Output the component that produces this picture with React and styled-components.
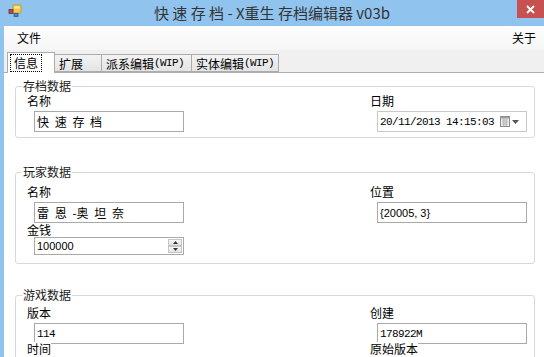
import React from "react";
import styled, { createGlobalStyle } from "styled-components";

const GlobalStyle = createGlobalStyle`
  html, body { margin: 0; padding: 0; background: #fff; }
  body { font-family: "Noto Sans CJK SC", sans-serif; font-size: 12px; color: #000; }
  * { box-sizing: border-box; }
`;

const Win = styled.div`
  width: 544px;
  height: 357px;
  overflow: hidden;
  display: flex;
  flex-direction: column;
  background: #fff;
`;

const TitleBar = styled.div`
  height: 26px;
  flex: none;
  background: #90c4ef;
  display: grid;
  grid-template-columns: 1fr auto 1fr;
  align-items: start;
`;

const AppIcon = styled.svg`
  justify-self: start;
  margin: 4px 0 0 8px;
  display: block;
`;

const Title = styled.div`
  font-family: "Noto Sans CJK SC", sans-serif;
  font-size: 15px;
  line-height: 26px;
  color: #333;
  white-space: nowrap;
`;

const CloseBtn = styled.div`
  justify-self: end;
  width: 27px;
  height: 18px;
  background: #c75050;
  display: flex;
  align-items: center;
  justify-content: center;
`;

const Body = styled.div`
  flex: 1;
  display: flex;
  min-height: 0;
`;

const SideBorder = styled.div`
  width: 4px;
  flex: none;
  background: #90c4ef;
`;

const Main = styled.div`
  flex: 1;
  min-width: 0;
  display: flex;
  flex-direction: column;
`;

const MenuBar = styled.div`
  height: 24px;
  flex: none;
  display: flex;
  justify-content: space-between;
  align-items: center;
  padding: 0 2px 0 7px;
  background: linear-gradient(#fdfdfd, #f6f6f6);
`;

const MenuItem = styled.span`
  padding: 0 6px;
  line-height: 20px;
  font-size: 12px;
`;

const TabStrip = styled.div`
  height: 23px;
  flex: none;
  display: flex;
  align-items: flex-end;
  padding-left: 3px;
  background: #f0f0f0;
  border-bottom: 1px solid #acacac;
`;

const Tab = styled.div`
  position: relative;
  z-index: ${(p) => (p.$active ? 1 : 0)};
  width: ${(p) => p.$w}px;
  height: ${(p) => (p.$active ? 21 : 18)}px;
  margin-bottom: ${(p) => (p.$active ? -1 : 0)}px;
  margin-left: ${(p) => (p.$first ? 0 : -1)}px;
  border: 1px solid #acacac;
  border-bottom: ${(p) => (p.$active ? "none" : "1px solid #acacac")};
  background: ${(p) => (p.$active ? "#fff" : "linear-gradient(#f3f3f3, #e4e4e4)")};
  padding: ${(p) => (p.$active ? "1px 2px 0 2px" : "0 4px")};
  display: flex;
  align-items: ${(p) => (p.$active ? "flex-start" : "center")};
  font-size: 12px;
  white-space: nowrap;
`;

const FocusBox = styled.span`
  border: 1px dotted #000;
  padding: 0 3px;
  line-height: 16px;
`;

const Half = styled.span`
  font-family: "Liberation Mono", monospace;
  font-size: 11px;
  letter-spacing: -0.6px;
`;

const Page = styled.div`
  flex: 1;
  background: #fff;
  padding: 13px 9px 0 11px;
  display: flex;
  flex-direction: column;
`;

const Group = styled.div`
  flex: none;
  border: 1px solid #d5d9dc;
  border-radius: 3px;
  margin-top: ${(p) => p.$mt || 0}px;
`;

const Legend = styled.div`
  width: fit-content;
  margin: -7px 0 0 6px;
  padding: 0 1px;
  line-height: 12px;
  background: #fff;
  color: #1a1a1a;
`;

const Grid = styled.div`
  display: grid;
  grid-template-columns: 157px 1fr 157px;
  padding: ${(p) => p.$pt}px 7px ${(p) => p.$pb}px 11px;
  align-items: start;
`;

const Col = styled.div`
  display: flex;
  flex-direction: column;
  grid-column: ${(p) => p.$col};
`;

const Label = styled.div`
  position: relative;
  z-index: 1;
  width: fit-content;
  line-height: 14px;
  background: #fff;
  margin-top: ${(p) => p.$mt || 0}px;
  margin-bottom: ${(p) => (p.$mb == null ? 3 : p.$mb)}px;
`;

const Box = styled.div`
  margin-left: 7px;
  width: 150px;
  height: ${(p) => p.$h || 21}px;
  border: 1px solid ${(p) => p.$border || "#a9a9a9"};
  background: #fff;
  display: flex;
  align-items: center;
  padding-left: 2px;
`;

const CjkText = styled.span`
  font-size: 12px;
  word-spacing: 3px;
  line-height: 14px;
`;

const MonoText = styled.span`
  font-family: "Liberation Mono", monospace;
  font-size: 11px;
  letter-spacing: -0.6px;
  line-height: 14px;
`;

const SansText = styled.span`
  font-family: "Liberation Sans", sans-serif;
  font-size: 11px;
  line-height: 14px;
`;

const Spacer = styled.div`
  flex: 1;
`;

const Spin = styled.div`
  width: 15px;
  height: 100%;
  display: flex;
  flex-direction: column;
  padding: 1px 1px 1px 0;
`;

const SpinBtn = styled.div`
  flex: 1;
  border: 1px solid #c5c5c5;
  background: linear-gradient(#f6f6f6, #e2e2e2);
  display: flex;
  align-items: center;
  justify-content: center;
`;

const DateIcons = styled.div`
  display: flex;
  align-items: center;
  gap: 2px;
  margin-right: 7px;
`;

function Up() {
  return (
    <svg width="5" height="3" viewBox="0 0 5 3">
      <path d="M2.5 0 L5 3 L0 3 Z" fill="#333" />
    </svg>
  );
}
function Down() {
  return (
    <svg width="5" height="3" viewBox="0 0 5 3">
      <path d="M0 0 L5 0 L2.5 3 Z" fill="#333" />
    </svg>
  );
}

export default function App() {
  return (
    <>
      <GlobalStyle />
      <Win>
        <TitleBar>
          <AppIcon width="14" height="14" viewBox="0 0 14 14">
            <rect x="5" y="1" width="8" height="8" fill="#f2c94c" stroke="#c9a227" strokeWidth="1" />
            <rect x="6.5" y="2.5" width="5" height="2" fill="#fff2b0" />
            <rect x="1" y="5.5" width="4" height="4" fill="#b64a3a" stroke="#5a3a55" strokeWidth="0.8" />
            <rect x="6" y="9.5" width="4" height="3" fill="#4f7fc6" stroke="#35598f" strokeWidth="0.8" />
          </AppIcon>
          <Title>快 速 存 档 - X重生 存档编辑器 v03b</Title>
          <CloseBtn>
            <svg width="9" height="9" viewBox="0 0 9 9">
              <path d="M1 1 L8 8 M8 1 L1 8" stroke="#fff" strokeWidth="1.8" />
            </svg>
          </CloseBtn>
        </TitleBar>
        <Body>
          <SideBorder />
          <Main>
            <MenuBar>
              <MenuItem>文件</MenuItem>
              <MenuItem>关于</MenuItem>
            </MenuBar>
            <TabStrip>
              <Tab $active $first $w={48}>
                <FocusBox>信息</FocusBox>
              </Tab>
              <Tab $w={48}>扩展</Tab>
              <Tab $w={91}>
                派系编辑<Half>(WIP)</Half>
              </Tab>
              <Tab $w={88}>
                实体编辑<Half>(WIP)</Half>
              </Tab>
            </TabStrip>
            <Page>
              <Group>
                <Legend>存档数据</Legend>
                <Grid $pt={2} $pb={5}>
                  <Col $col={1}>
                    <Label>名称</Label>
                    <Box>
                      <CjkText>快 速 存 档</CjkText>
                    </Box>
                  </Col>
                  <Col $col={3}>
                    <Label>日期</Label>
                    <Box $border="#c8c8c8">
                      <MonoText>20/11/2013 14:15:03</MonoText>
                      <Spacer />
                      <DateIcons>
                        <svg width="10" height="11" viewBox="0 0 10 11">
                          <rect x="0.5" y="0.5" width="9" height="10" fill="#eee" stroke="#8a8a8a" />
                          <rect x="0.5" y="0.5" width="9" height="2" fill="#9a9a9a" />
                          <path d="M2 4h6M2 6h6M2 8h6M3.5 3v7M5 3v7M6.5 3v7" stroke="#b0b0b0" strokeWidth="0.7" />
                        </svg>
                        <svg width="7" height="4" viewBox="0 0 7 4">
                          <path d="M0 0 L7 0 L3.5 4 Z" fill="#555" />
                        </svg>
                      </DateIcons>
                    </Box>
                  </Col>
                </Grid>
              </Group>
              <Group $mt={34}>
                <Legend>玩家数据</Legend>
                <Grid $pt={7} $pb={8}>
                  <Col $col={1}>
                    <Label>名称</Label>
                    <Box>
                      <CjkText>雷 恩 -奥 坦 奈</CjkText>
                    </Box>
                    <Label $mb={0}>金钱</Label>
                    <Box $h={18}>
                      <SansText>100000</SansText>
                      <Spacer />
                      <Spin>
                        <SpinBtn>
                          <Up />
                        </SpinBtn>
                        <SpinBtn>
                          <Down />
                        </SpinBtn>
                      </Spin>
                    </Box>
                  </Col>
                  <Col $col={3}>
                    <Label>位置</Label>
                    <Box>
                      <SansText>{"{20005, 3}"}</SansText>
                    </Box>
                  </Col>
                </Grid>
              </Group>
              <Group $mt={31}>
                <Legend>游戏数据</Legend>
                <Grid $pt={5} $pb={20}>
                  <Col $col={1}>
                    <Label>版本</Label>
                    <Box>
                      <MonoText>114</MonoText>
                    </Box>
                    <Label $mt={-2}>时间</Label>
                  </Col>
                  <Col $col={3}>
                    <Label>创建</Label>
                    <Box>
                      <MonoText>178922M</MonoText>
                    </Box>
                    <Label $mt={-2}>原始版本</Label>
                  </Col>
                </Grid>
              </Group>
            </Page>
          </Main>
        </Body>
      </Win>
    </>
  );
}
